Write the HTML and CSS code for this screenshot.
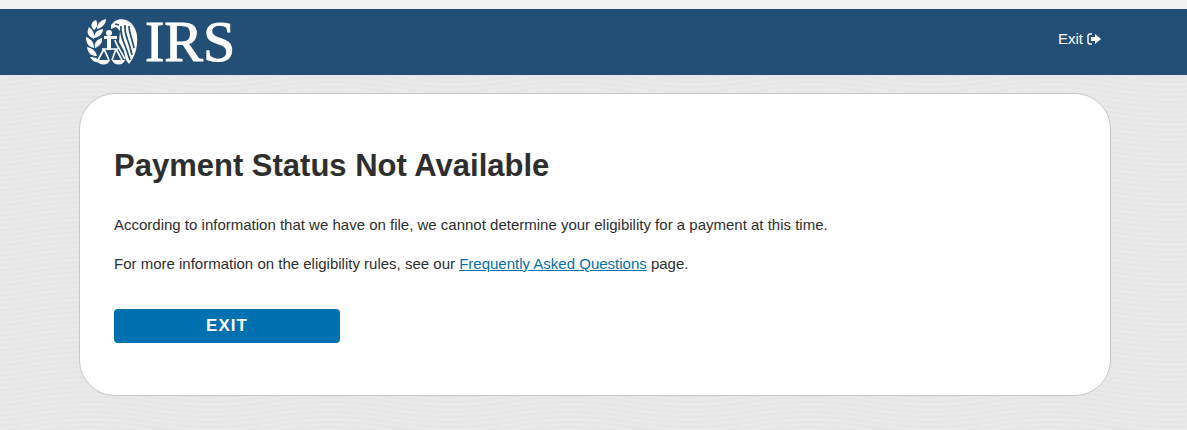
FILE: index.html
```html
<!DOCTYPE html>
<html lang="en">
<head>
<meta charset="utf-8">
<meta name="viewport" content="width=device-width, initial-scale=1">
<title>Payment Status Not Available</title>
<link rel="stylesheet" href="styles.css">
</head>
<body>
<header class="site-header">
  <div class="brand">
    <svg class="brand-mark" viewBox="0 0 53 48" aria-hidden="true">
      <g fill="#fff">
        <path d="M10 2C5 4 4 8 8 12C12 9 12 5 10 2ZM20 1C13 3 11 7 11 11C16 10 20 6 20 1ZM3 9C0 15 2 18 8 21C9 16 7 12 3 9ZM17 11C11 12 8 15 8 20C14 19 17 15 17 11ZM0 19C0 26 3 29 8 30C8 24 5 21 0 19ZM16 20C10 22 8 25 9 30C14 28 17 24 16 20ZM1 29C2 36 6 38 11 38C10 33 6 30 1 29ZM4 39C7 44 11 45 14 44C13 41 9 39 4 39Z"/>
        <path d="M25 7L29 3C34 0 41 1 45 5C50 10 52 17 51 26C50 35 47 41 43 46L40 42L38 33L33 24L34 13L30 9L25 11Z"/>
        <circle cx="23" cy="15" r="3"/>
        <path d="M18 18H31V21H25V32H21V21H18Z"/>
      </g>
      <g fill="none" stroke="#234e75" stroke-width="1.7">
        <path d="M35 8C34 16 37 23 40 30L44 42M39 7C38 15 42 22 44 29L46 37M43 8C43 15 46 20 48 30M29 6L33 7"/>
      </g>
      <g fill="none" stroke="#fff" stroke-width="1.7">
        <path d="M29 22C30 27 35 33 39 41"/>
        <path d="M16 31H32M18 31L12 42M18 31L23 42M30 31L26 42M30 31L36 42"/>
      </g>
      <g fill="#fff">
        <path d="M10 42H24C22 48 13 48 10 42ZM26 42H39C37 48 28 48 26 42Z"/>
      </g>
    </svg>
    <span class="brand-name">IRS</span>
  </div>
  <a class="exit-link" href="#exit">Exit
    <svg class="exit-icon" viewBox="0 0 14 12" aria-hidden="true">
      <path d="M5 1H3Q1 1 1 3V9Q1 11 3 11H5" fill="none" stroke="#fff" stroke-width="1.4"/>
      <path d="M4 4H8V1L14 6L8 11V8H4Z" fill="#fff"/>
    </svg>
  </a>
</header>
<main class="page">
  <section class="card">
    <h1 class="title">Payment Status Not Available</h1>
    <p class="text">According to information that we have on file, we cannot determine your eligibility for a payment at this time.</p>
    <p class="text">For more information on the eligibility rules, see our <a class="link" href="#faq">Frequently Asked Questions</a> page.</p>
    <button class="button" type="button">EXIT</button>
  </section>
</main>
</body>
</html>
```

FILE: styles.css
```css
* {
  box-sizing: border-box;
}

body {
  margin: 0;
  min-height: 100vh;
  border-top: 9px solid #f2f2f2;
  background: #e9e9e9 url("data:image/svg+xml,%3Csvg xmlns='http://www.w3.org/2000/svg' width='240' height='5'%3E%3Cpath d='M0 2C60 2 60 -8 120 -8S180 2 240 2M0 7C60 7 60 -3 120 -3S180 7 240 7M0 12C60 12 60 2 120 2S180 12 240 12M0 17C60 17 60 7 120 7S180 17 240 17' fill='none' stroke='%23e5e5e5' stroke-width='2'/%3E%3C/svg%3E") -30px 0;
  color: #2e2e2e;
  font-family: "Liberation Sans", Arial, sans-serif;
  font-size: 15px;
}

.site-header {
  display: flex;
  justify-content: space-between;
  height: 66px;
  padding: 0 86px;
  background: #234e75;
  color: #fff;
}

.brand {
  display: flex;
  align-items: center;
  gap: 6px;
}

.brand-mark {
  width: 53px;
  height: 48px;
}

.brand-name {
  font-family: "Liberation Serif", "Times New Roman", serif;
  font-size: 58px;
  line-height: 66px;
  -webkit-text-stroke: 1px #fff;
}

.exit-link {
  display: flex;
  align-items: center;
  align-self: flex-start;
  gap: 4px;
  padding-top: 20px;
  color: #fff;
  font-size: 15px;
  line-height: 20px;
  text-decoration: none;
}

.exit-icon {
  width: 14px;
  height: 12px;
}

.page {
  padding: 18px 76px 34px 79px;
}

.card {
  padding: 51px 34px 52px;
  border: 1px solid #c8c8c8;
  border-radius: 36px;
  background: #fff;
}

.title {
  margin: 0 0 28px;
  font-size: 31px;
  line-height: 42px;
}

.text {
  margin: 0 0 19px;
  line-height: 20px;
}

.link {
  color: #0071b0;
}

.button {
  display: block;
  width: 226px;
  height: 34px;
  margin-top: 35px;
  padding: 0;
  border: 0;
  border-radius: 4px;
  background: #0071b0;
  color: #fff;
  font-family: inherit;
  font-size: 17px;
  font-weight: bold;
  letter-spacing: 1px;
}
```
